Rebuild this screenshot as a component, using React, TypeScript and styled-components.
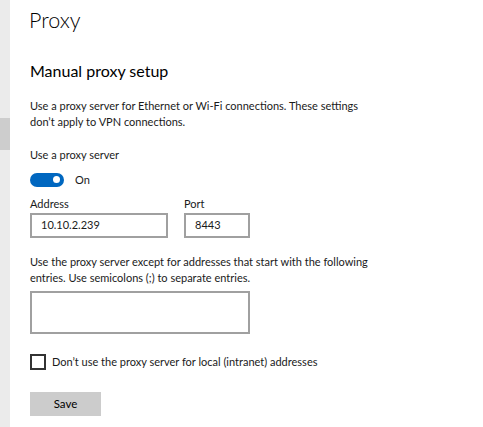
import React from "react";
import styled, { createGlobalStyle } from "styled-components";

const Global = createGlobalStyle`
  html, body { margin: 0; padding: 0; background: #ffffff; }
  body { font-family: "Lato", "Noto Sans", sans-serif; color: #1a1a1a; }
  #root { height: 427px; }
`;

const Page = styled.div`
  display: flex;
  height: 427px;
  overflow: hidden;
`;

const Rail = styled.div`
  width: 10px;
  flex: none;
  background: #ebebeb;
  padding-top: 118px;
  box-sizing: border-box;
`;

const Thumb = styled.div`
  height: 32px;
  background: #cdcdcd;
`;

const Content = styled.main`
  flex: 1;
  padding-left: 20px;
  display: flex;
  flex-direction: column;
  align-items: flex-start;
`;

const Title = styled.h1`
  margin: 4px 0 0 -1px;
  font-size: 21.5px;
  line-height: 32px;
  font-weight: 300;
  color: #000;
`;

const Heading = styled.h2`
  margin: 23px 0 0;
  font-size: 16px;
  line-height: 24px;
  font-weight: 400;
  color: #000;
`;

const Text = styled.p<{ $top: number }>`
  margin: ${(p) => p.$top}px 0 0;
  font-size: 11px;
  line-height: 16px;
  color: #1a1a1a;
`;

const ToggleRow = styled.div`
  margin-top: 9.5px;
  display: flex;
  align-items: center;
  gap: 11px;
  height: 14px;
`;

const Track = styled.div`
  width: 34px;
  height: 14px;
  border-radius: 7px;
  background: #0067c0;
  display: flex;
  align-items: center;
  justify-content: flex-end;
  padding-right: 4px;
  box-sizing: border-box;
`;

const Knob = styled.div`
  width: 7px;
  height: 7px;
  border-radius: 50%;
  background: #fff;
`;

const SmallText = styled.span`
  font-size: 11px;
  line-height: 16px;
`;

const Fields = styled.div`
  margin-top: 9.5px;
  display: flex;
  gap: 16px;
`;

const Field = styled.label`
  display: flex;
  flex-direction: column;
  font-size: 11px;
  line-height: 16px;
`;

const Input = styled.div<{ $w: number }>`
  margin-top: 0.5px;
  width: ${(p) => p.$w}px;
  height: 25px;
  box-sizing: border-box;
  border: 2px solid #a0a0a0;
  padding-left: 9px;
  display: flex;
  align-items: center;
  font-size: 11px;
  color: #1a1a1a;
`;

const Area = styled.div`
  margin-top: 4.5px;
  width: 220px;
  height: 43px;
  box-sizing: border-box;
  border: 2px solid #a0a0a0;
`;

const CheckRow = styled.label`
  margin-top: 20px;
  display: flex;
  align-items: center;
  gap: 6px;
  height: 16px;
`;

const Box = styled.span`
  width: 16px;
  height: 16px;
  box-sizing: border-box;
  border: 2px solid #333;
  flex: none;
`;

const Button = styled.button`
  margin-top: 22px;
  width: 71px;
  height: 24px;
  border: none;
  background: #cccccc;
  font-family: inherit;
  font-size: 11.5px;
  color: #000;
  padding: 0;
`;

export default function App() {
  return (
    <Page>
      <Global />
      <Rail>
        <Thumb />
      </Rail>
      <Content>
        <Title>Proxy</Title>
        <Heading>Manual proxy setup</Heading>
        <Text $top={15}>
          Use a proxy server for Ethernet or Wi-Fi connections. These settings
          <br />
          don’t apply to VPN connections.
        </Text>
        <Text $top={17}>Use a proxy server</Text>
        <ToggleRow>
          <Track>
            <Knob />
          </Track>
          <SmallText>On</SmallText>
        </ToggleRow>
        <Fields>
          <Field>
            Address
            <Input $w={138}>10.10.2.239</Input>
          </Field>
          <Field>
            Port
            <Input $w={66}>8443</Input>
          </Field>
        </Fields>
        <Text $top={16.5}>
          Use the proxy server except for addresses that start with the following
          <br />
          entries. Use semicolons (;) to separate entries.
        </Text>
        <Area />
        <CheckRow>
          <Box />
          <SmallText>Don’t use the proxy server for local (intranet) addresses</SmallText>
        </CheckRow>
        <Button>Save</Button>
      </Content>
    </Page>
  );
}
